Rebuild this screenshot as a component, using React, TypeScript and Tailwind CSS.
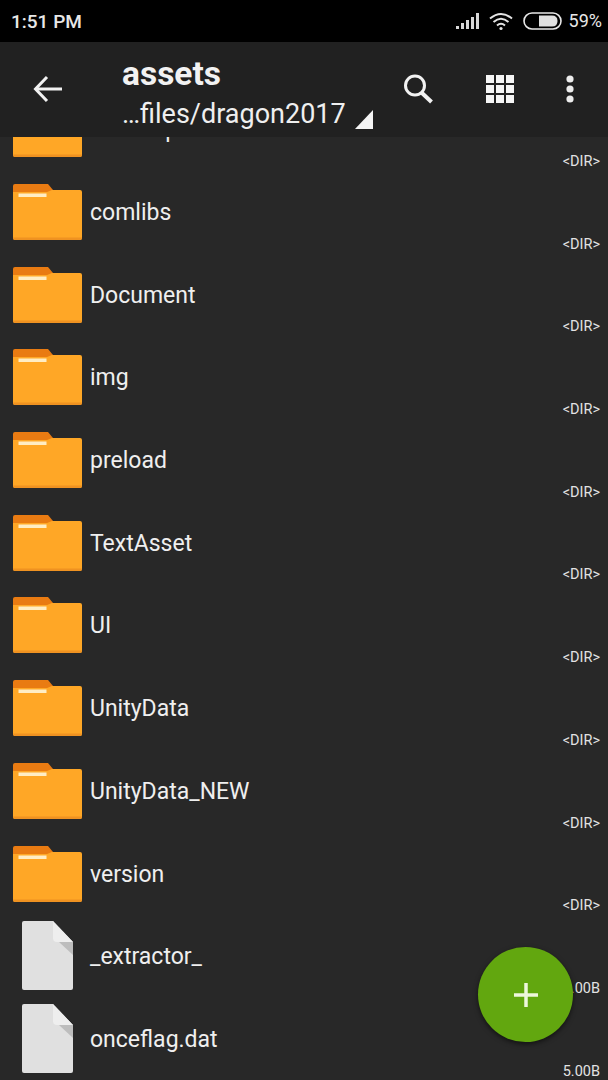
import React from 'react';

interface Entry {
  name: string;
  size: string;
  kind: 'dir' | 'file';
}

const entries: Entry[] = [
  { name: 'cuiTemp', size: '<DIR>', kind: 'dir' },
  { name: 'comlibs', size: '<DIR>', kind: 'dir' },
  { name: 'Document', size: '<DIR>', kind: 'dir' },
  { name: 'img', size: '<DIR>', kind: 'dir' },
  { name: 'preload', size: '<DIR>', kind: 'dir' },
  { name: 'TextAsset', size: '<DIR>', kind: 'dir' },
  { name: 'UI', size: '<DIR>', kind: 'dir' },
  { name: 'UnityData', size: '<DIR>', kind: 'dir' },
  { name: 'UnityData_NEW', size: '<DIR>', kind: 'dir' },
  { name: 'version', size: '<DIR>', kind: 'dir' },
  { name: '_extractor_', size: '5.00B', kind: 'file' },
  { name: 'onceflag.dat', size: '5.00B', kind: 'file' },
];

const FolderIcon = () => (
  <svg width="69" height="56" viewBox="0 0 69 56" className="mt-[7px]">
    <path d="M2 0H35L40 6V9H0V2Q0 0 2 0Z" fill="#e97b12" />
    <path d="M0 8H34L39 6H67Q69 6 69 8V54Q69 56 67 56H2Q0 56 0 54Z" fill="#ffa726" />
    <path d="M0 53.5H69V54Q69 56 67 56H2Q0 56 0 54Z" fill="#ef9221" />
    <rect x="5.5" y="9.5" width="28" height="3.5" fill="#ffedc4" />
  </svg>
);

const FileIcon = () => (
  <svg width="51" height="69" viewBox="0 0 51 69">
    <path d="M2 0H31L51 21V67Q51 69 49 69H2Q0 69 0 67V2Q0 0 2 0Z" fill="#e0e0e0" />
    <path d="M37 21H51V34Z" fill="#bdbdbd" />
    <path d="M31 0L51 21H35Q31 21 31 17Z" fill="#eeeeee" />
  </svg>
);

const StatusBar = () => (
  <div className="flex h-[42px] shrink-0 items-center bg-black pl-[11px] pr-[6px] text-[#e8e8e8]">
    <span className="text-[19px] font-medium leading-none">1:51 PM</span>
    <svg width="24" height="18" viewBox="0 0 24 18" className="ml-auto" fill="#d8d8d8">
      <rect x="0" y="14" width="3" height="3" />
      <rect x="5" y="11" width="3" height="6" />
      <rect x="10" y="8" width="3" height="9" />
      <rect x="15" y="5" width="3" height="12" />
      <rect x="20" y="1" width="3" height="16" />
    </svg>
    <svg width="25" height="19" viewBox="0 0 25 19" className="ml-[9px]" fill="none" stroke="#e4e4e4" strokeWidth="2">
      <path d="M1 6.5Q12 -2.5 23 6.5" />
      <path d="M4.5 10Q12 3.5 19.5 10" />
      <path d="M8 13.5Q12 10 16 13.5" />
      <circle cx="12" cy="16.5" r="1.6" fill="#e4e4e4" stroke="none" />
    </svg>
    <svg width="39" height="18" viewBox="0 0 39 18" className="ml-[9px]">
      <rect x="1" y="1" width="37" height="16" rx="8" fill="none" stroke="#e8e8e8" strokeWidth="1.6" />
      <path d="M16 3.5H29Q34.5 3.5 34.5 9Q34.5 14.5 29 14.5H16Z" fill="#e0e0e0" />
    </svg>
    <span className="ml-[7px] text-[18px] leading-none">59%</span>
  </div>
);

const Toolbar = () => (
  <div className="relative z-10 flex h-[95px] shrink-0 items-start bg-[#212121] text-white">
    <svg width="30" height="28" viewBox="0 0 30 28" className="ml-[33px] mt-[33px] shrink-0" fill="none" stroke="#f2f2f2" strokeWidth="3">
      <path d="M29 14H3" />
      <path d="M14 2L2.5 14L14 26" />
    </svg>
    <div className="ml-[59px] flex w-[254px] shrink-0 flex-col">
      <span className="mt-[12px] text-[33.5px] font-bold leading-[40px] text-[#f2f2f2]">assets</span>
      <div className="mt-[2px] flex items-end">
        <span className="text-[27px] leading-[36px] text-[#efefef]">…files/dragon2017</span>
        <svg width="18" height="19" viewBox="0 0 18 19" className="mb-[3px] ml-[9px] shrink-0">
          <path d="M0 19H18V0Z" fill="#f5f5f5" />
        </svg>
      </div>
    </div>
    <svg width="32" height="32" viewBox="0 0 32 32" className="ml-[26px] mt-[31px] shrink-0" fill="none" stroke="#f2f2f2">
      <circle cx="13" cy="12.5" r="9.5" strokeWidth="3" />
      <path d="M20 20L29.5 29" strokeWidth="4" />
    </svg>
    <svg width="28" height="28" viewBox="0 0 28 28" className="ml-[52px] mt-[33px] shrink-0" fill="#f5f5f5">
      <rect x="0" y="0" width="8" height="8" />
      <rect x="10" y="0" width="8" height="8" />
      <rect x="20" y="0" width="8" height="8" />
      <rect x="0" y="10" width="8" height="8" />
      <rect x="10" y="10" width="8" height="8" />
      <rect x="20" y="10" width="8" height="8" />
      <rect x="0" y="20" width="8" height="8" />
      <rect x="10" y="20" width="8" height="8" />
      <rect x="20" y="20" width="8" height="8" />
    </svg>
    <svg width="8" height="28" viewBox="0 0 8 28" className="ml-[52px] mt-[33px] shrink-0" fill="#ededed">
      <circle cx="4" cy="4" r="3.6" />
      <circle cx="4" cy="14" r="3.6" />
      <circle cx="4" cy="24" r="3.6" />
    </svg>
  </div>
);

const Row = ({ entry }: { entry: Entry }) => (
  <div className="flex h-[82.7px] items-start pl-[13px] pr-[8px] pt-[3px]">
    <div className="flex w-[69px] shrink-0 justify-center">
      {entry.kind === 'dir' ? <FolderIcon /> : <FileIcon />}
    </div>
    <span className="ml-[8px] mt-[22px] text-[23px] leading-[28px] text-[#efefef]">{entry.name}</span>
    <span className="mb-[4px] ml-auto self-end text-[14.5px] leading-[16px] text-[#e2e2e2]">{entry.size}</span>
  </div>
);

export default function App() {
  return (
    <div className="relative flex h-[1080px] w-[608px] flex-col overflow-hidden bg-[#282828] font-['Roboto',sans-serif]">
      <StatusBar />
      <Toolbar />
      <div className="-mt-[45.7px] shrink-0">
        {entries.map((entry) => (
          <Row key={entry.name} entry={entry} />
        ))}
      </div>
      <button className="absolute left-[478px] top-[947px] z-10 flex h-[95px] w-[95px] items-center justify-center rounded-full bg-[#62a70f] shadow-[0_2px_5px_rgba(0,0,0,0.55)]">
        <svg width="26" height="26" viewBox="0 0 26 26" stroke="#eef7dc" strokeWidth="3.5">
          <path d="M13 1V25" />
          <path d="M1 13H25" />
        </svg>
      </button>
    </div>
  );
}
